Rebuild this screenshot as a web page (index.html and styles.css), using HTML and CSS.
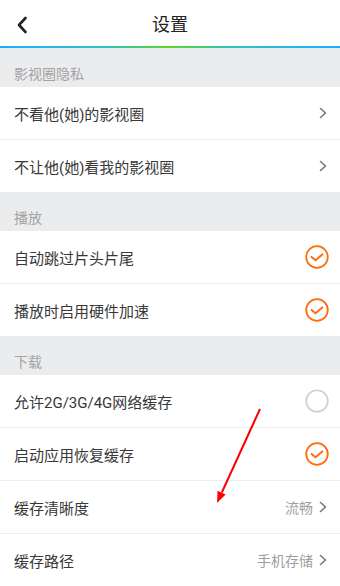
FILE: index.html
```html
<!DOCTYPE html>
<html lang="zh-CN">
<head>
<meta charset="utf-8">
<title>设置</title>
<link rel="stylesheet" href="styles.css">
</head>
<body>
<div class="page">
  <header class="topbar">
    <span class="back">
      <svg width="12" height="18" viewBox="0 0 12 18"><path d="M9.5 2 L3 9 L9.5 16" fill="none" stroke="#222" stroke-width="2.6" stroke-linecap="round" stroke-linejoin="round"/></svg>
    </span>
    <h1 class="title">设置</h1>
  </header>
  <div class="accent"></div>

  <div class="section">影视圈隐私</div>
  <div class="group">
    <div class="row"><span class="label">不看他(她)的影视圈</span><span class="right"><svg class="chev" width="8" height="12" viewBox="0 0 8 12"><path d="M1.5 1.5 L6.5 6 L1.5 10.5" fill="none" stroke="#777" stroke-width="1.6" stroke-linecap="round" stroke-linejoin="round"/></svg></span></div>
    <div class="row"><span class="label">不让他(她)看我的影视圈</span><span class="right"><svg class="chev" width="8" height="12" viewBox="0 0 8 12"><path d="M1.5 1.5 L6.5 6 L1.5 10.5" fill="none" stroke="#777" stroke-width="1.6" stroke-linecap="round" stroke-linejoin="round"/></svg></span></div>
  </div>

  <div class="section">播放</div>
  <div class="group">
    <div class="row"><span class="label">自动跳过片头片尾</span><span class="right"><svg class="check" width="24" height="24" viewBox="0 0 24 24"><circle cx="12" cy="12" r="10.8" fill="none" stroke="#ff6c0a" stroke-width="1.8"/><path d="M6.6 12 L10.5 15.2 L17.3 9.4" fill="none" stroke="#ff6c0a" stroke-width="2" stroke-linecap="round" stroke-linejoin="round"/></svg></span></div>
    <div class="row"><span class="label">播放时启用硬件加速</span><span class="right"><svg class="check" width="24" height="24" viewBox="0 0 24 24"><circle cx="12" cy="12" r="10.8" fill="none" stroke="#ff6c0a" stroke-width="1.8"/><path d="M6.6 12 L10.5 15.2 L17.3 9.4" fill="none" stroke="#ff6c0a" stroke-width="2" stroke-linecap="round" stroke-linejoin="round"/></svg></span></div>
  </div>

  <div class="section">下载</div>
  <div class="group">
    <div class="row"><span class="label">允许2G/3G/4G网络缓存</span><span class="right"><svg class="check" width="24" height="24" viewBox="0 0 24 24"><circle cx="12" cy="12" r="10.8" fill="none" stroke="#cfcfcf" stroke-width="1.6"/></svg></span></div>
    <div class="row"><span class="label">启动应用恢复缓存</span><span class="right"><svg class="check" width="24" height="24" viewBox="0 0 24 24"><circle cx="12" cy="12" r="10.8" fill="none" stroke="#ff6c0a" stroke-width="1.8"/><path d="M6.6 12 L10.5 15.2 L17.3 9.4" fill="none" stroke="#ff6c0a" stroke-width="2" stroke-linecap="round" stroke-linejoin="round"/></svg></span></div>
    <div class="row"><span class="label">缓存清晰度</span><span class="right"><span class="value">流畅</span><svg class="chev" width="8" height="12" viewBox="0 0 8 12"><path d="M1.5 1.5 L6.5 6 L1.5 10.5" fill="none" stroke="#777" stroke-width="1.6" stroke-linecap="round" stroke-linejoin="round"/></svg></span></div>
    <div class="row"><span class="label">缓存路径</span><span class="right"><span class="value">手机存储</span><svg class="chev" width="8" height="12" viewBox="0 0 8 12"><path d="M1.5 1.5 L6.5 6 L1.5 10.5" fill="none" stroke="#777" stroke-width="1.6" stroke-linecap="round" stroke-linejoin="round"/></svg></span></div>
  </div>

  <svg class="annot" width="340" height="586" viewBox="0 0 340 586">
    <line x1="260" y1="409" x2="221.8" y2="492.5" stroke="#f00" stroke-width="2"/>
    <polygon points="217,503 225.6,494.6 217.6,490.8" fill="#f00"/>
  </svg>
</div>
</body>
</html>
```
FILE: styles.css
```css
html, body {
  margin: 0;
  padding: 0;
  background: #fff;
}
body {
  font-family: Roboto, "Noto Sans CJK SC", sans-serif;
  color: #333;
}
.page {
  position: relative;
  width: 340px;
  height: 586px;
  overflow: hidden;
}
.topbar {
  position: relative;
  height: 46px;
  display: flex;
  align-items: center;
  justify-content: center;
  background: #fff;
}
.back {
  position: absolute;
  left: 16px;
  top: 16px;
  width: 12px;
  height: 18px;
  display: block;
}
.back svg { display: block; }
.title {
  margin: 0;
  padding-top: 3px;
  font-size: 18px;
  font-weight: normal;
  color: #222;
  line-height: 24px;
}
.accent {
  height: 2px;
  background: linear-gradient(90deg, #1aafff 0%, #2fc0c8 30%, #5fd42a 50%, #2fc0c8 70%, #1aafff 100%);
}
.section {
  height: 39px;
  box-sizing: border-box;
  padding: 18px 14px 0;
  background: #ebecee;
  color: #a3a3a3;
  font-size: 14px;
  line-height: 16px;
}
.group {
  background: #fff;
}
.row {
  height: 52px;
  display: flex;
  align-items: center;
  justify-content: space-between;
  padding: 0 11px 0 14px;
  font-size: 15px;
  color: #383838;
}
.row + .row {
  border-top: 1px solid #efefef;
}
.group:last-of-type .row:last-child {
  border-bottom: 1px solid #efefef;
}
.right {
  display: flex;
  align-items: center;
}
.value {
  font-size: 14px;
  color: #9e9e9e;
  margin-right: 6px;
}
.chev {
  display: block;
  margin-right: 2px;
}
.check {
  display: block;
}
.annot {
  position: absolute;
  left: 0;
  top: 0;
  pointer-events: none;
}
```
